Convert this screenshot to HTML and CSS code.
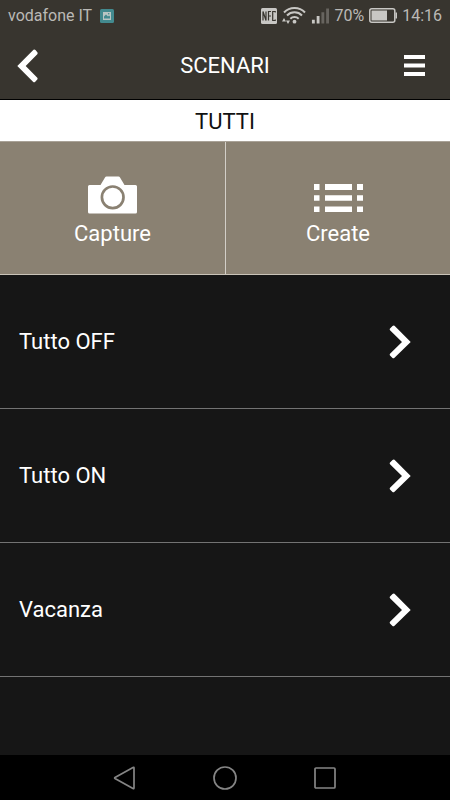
FILE: index.html
```html
<!DOCTYPE html>
<html lang="it">
<head>
<meta charset="utf-8">
<meta name="viewport" content="width=device-width, initial-scale=1">
<title>Scenari</title>
<link rel="stylesheet" href="styles.css">
</head>
<body>
<div class="status">
  <span class="carrier">vodafone IT</span>
  <svg class="photo" width="14" height="14" viewBox="0 0 14 14" aria-hidden="true"><rect width="14" height="14" rx="1.5" fill="#438a8f"/><path d="M3 3h8v8H3z" fill="#b9c6c4"/><path d="M4 9.5V7.5l2-2 2 2 1-1 1 1v2z" fill="#438a8f"/><circle cx="8.7" cy="4.8" r=".8" fill="#438a8f"/></svg>
  <div class="indicators">
    <svg class="nfc" width="16" height="16" viewBox="0 0 16 16" role="img" aria-label="NFC"><rect width="16" height="16" rx="1.5" fill="#c8c7c4"/><path d="M2 12.5v-9l3 9v-9M7.500 12.500v-9H10M7.500 8H10M14.200 4.500V3.500H11.700v9h2.500v-1" fill="none" stroke="#38352f" stroke-width="1.2"/></svg>
    <svg class="wifi" width="24" height="17" viewBox="0 0 24 17" aria-hidden="true"><g fill="none" stroke="#c8c7c4" stroke-width="2"><path d="M2 5.500a14.500 14.500 0 0 1 21 0M5 8.500a10.500 10.500 0 0 1 15 0M8.300 11.700a6 6 0 0 1 8.400 0"/></g><circle cx="12.500" cy="14.700" r="1.900" fill="#c8c7c4"/><path d="M0 14.500l2-3.500 2 3.500zM4 13.500h4l-2 3.500z" fill="#c8c7c4"/></svg>
    <svg class="signal" width="18" height="16" viewBox="0 0 19 16" aria-hidden="true"><path d="M1 12h3v4H1zM6 8h3v8H6z" fill="#c8c7c4"/><path d="M11 4h3v12h-3zM16 0h3v16h-3z" fill="#67645f"/></svg>
    <span class="percent">70%</span>
    <svg class="battery" width="28" height="15" viewBox="0 0 28 15" aria-hidden="true"><rect x=".8" y=".8" width="25" height="13.400" rx="2" fill="none" stroke="#c8c7c4" stroke-width="1.500"/><path d="M2.500 2.500h15.500v10H2.500zM26.500 4.500H28v6h-1.500z" fill="#c8c7c4"/></svg>
    <span>14:16</span>
  </div>
</div>
<header class="header">
  <button class="icon-button" type="button" aria-label="Indietro"><svg width="22" height="34" viewBox="0 0 22 34"><path d="M16.500 .7Q17.500 0 18.500 1L20.500 3.500Q21 4.300 20.300 5.200L8.700 17 20.300 28.800Q21 29.700 20.300 30.500L18 33Q17 33.700 16 32.700L.3 17z" fill="#fff"/></svg></button>
  <h1 class="title">SCENARI</h1>
  <button class="icon-button menu" type="button" aria-label="Menu"><svg width="21" height="22" viewBox="0 0 21 22"><path d="M0 0h21v4H0zM0 8.500h21v4H0zM0 17h21v4H0z" fill="#fff"/></svg></button>
</header>
<main class="main">
  <h2 class="filter">TUTTI</h2>
  <div class="actions">
    <button class="action" type="button">
      <svg width="49" height="38" viewBox="0 0 49 38" aria-hidden="true"><path d="M1.500 9H12.500L17 1.500Q17.500.5 18.500.5H30.500Q31.500.5 32 1.500L36.500 9H47.500Q49 9 49 10.500V36Q49 37.500 47.500 37.500H1.500Q0 37.500 0 36V10.500Q0 9 1.500 9z" fill="#fff"/><circle cx="24.700" cy="21.300" r="10.800" fill="none" stroke="#8a8172" stroke-width="2.700"/></svg>
      Capture
    </button>
    <button class="action" type="button">
      <svg width="49" height="38" viewBox="0 0 49 38" aria-hidden="true"><path d="M0 8h5.500v6H0zM11 8h27v6H11zM43 8h6v6h-6zM0 19.300h5.500v5.500H0zM11 19.300h27v5.500H11zM43 19.300h6v5.500h-6zM0 30.500h5.500V36H0zM11 30.500h27V36H11zM43 30.500h6V36h-6z" fill="#fff"/></svg>
      Create
    </button>
  </div>
  <nav class="scenes" aria-label="Scenari">
    <a class="scene" href="#off">Tutto OFF<svg width="22" height="34" viewBox="0 0 22 34" aria-hidden="true"><path d="M5.500 .7Q4.500 0 3.500 1L1 3.500Q.3 4.300 1 5.200L13 17 1 28.800Q.3 29.700 1 30.500L3.500 33Q4.500 33.700 5.500 32.700L21.700 17z" fill="#fff"/></svg></a>
    <a class="scene" href="#on">Tutto ON<svg width="22" height="34" viewBox="0 0 22 34" aria-hidden="true"><path d="M5.500 .7Q4.500 0 3.500 1L1 3.500Q.3 4.300 1 5.200L13 17 1 28.800Q.3 29.700 1 30.500L3.500 33Q4.500 33.700 5.500 32.700L21.700 17z" fill="#fff"/></svg></a>
    <a class="scene" href="#vacanza">Vacanza<svg width="22" height="34" viewBox="0 0 22 34" aria-hidden="true"><path d="M5.500 .7Q4.500 0 3.500 1L1 3.500Q.3 4.300 1 5.200L13 17 1 28.800Q.3 29.700 1 30.500L3.500 33Q4.500 33.700 5.500 32.700L21.700 17z" fill="#fff"/></svg></a>
  </nav>
</main>
<footer class="system">
  <button class="system-button" type="button" aria-label="Back"><svg width="24" height="24" viewBox="0 0 24 24"><path d="M20 1.500Q21 1 21 2V22Q21 23 20 22.500L2 12.500Q1.300 12 2 11.500z"/></svg></button>
  <button class="system-button" type="button" aria-label="Home"><svg width="24" height="24" viewBox="0 0 24 24"><circle cx="12" cy="12" r="11"/></svg></button>
  <button class="system-button" type="button" aria-label="Recent apps"><svg width="24" height="24" viewBox="0 0 24 24"><rect x="2" y="2" width="20" height="20" rx="1"/></svg></button>
</footer>
</body>
</html>
```
FILE: styles.css
```css
* {
  box-sizing: border-box;
}

body {
  margin: 0;
  min-height: 100vh;
  display: flex;
  flex-direction: column;
  background: #161616;
  color: #fff;
  font: 22px/28px Roboto, sans-serif;
}

svg {
  display: block;
  flex: none;
}

button {
  border: 0;
  padding: 0;
  background: none;
  color: inherit;
  font: inherit;
}

.status {
  height: 32px;
  padding: 0 8px 1px;
  display: flex;
  align-items: center;
  background: #38352f;
  color: #bbb9b6;
  font-size: 16px;
}

.photo {
  margin-left: 8px;
}

.indicators {
  margin-left: auto;
  display: flex;
  align-items: center;
  gap: 5px;
}

.header {
  height: 68px;
  padding: 0 16px;
  display: grid;
  grid-template-columns: 32px 1fr 32px;
  align-items: center;
  background: #38352f;
  border-bottom: 1px solid #000;
}

.icon-button {
  height: 48px;
  padding: 0 1px;
  display: flex;
  align-items: center;
}

.menu {
  justify-content: flex-end;
  padding: 0 9px;
}

.title,
.filter {
  margin: 0;
  font-size: 22px;
  font-weight: 400;
  text-align: center;
}

.filter {
  height: 41px;
  line-height: 43px;
  background: #fff;
  color: #111;
}

.actions {
  display: grid;
  grid-template-columns: 1fr 1fr;
  border-top: 1px solid #a9a297;
}

.action {
  height: 132px;
  padding-top: 7px;
  display: flex;
  flex-direction: column;
  align-items: center;
  justify-content: center;
  gap: 6px;
  background: #8a8172;
}

.action + .action {
  border-left: 1px solid #d3cfc8;
}

.scenes {
  border-top: 1px solid #c9c3b8;
}

.scene {
  height: 134px;
  padding: 0 39px 0 19px;
  display: flex;
  align-items: center;
  justify-content: space-between;
  border-bottom: 1px solid #737373;
  color: inherit;
  text-decoration: none;
}

.system {
  height: 45px;
  margin-top: auto;
  display: flex;
  justify-content: center;
  background: #000;
}

.system-button {
  width: 100px;
  display: grid;
  place-items: center;
}

.system-button svg {
  fill: none;
  stroke: #858585;
  stroke-width: 1.7;
}
```
